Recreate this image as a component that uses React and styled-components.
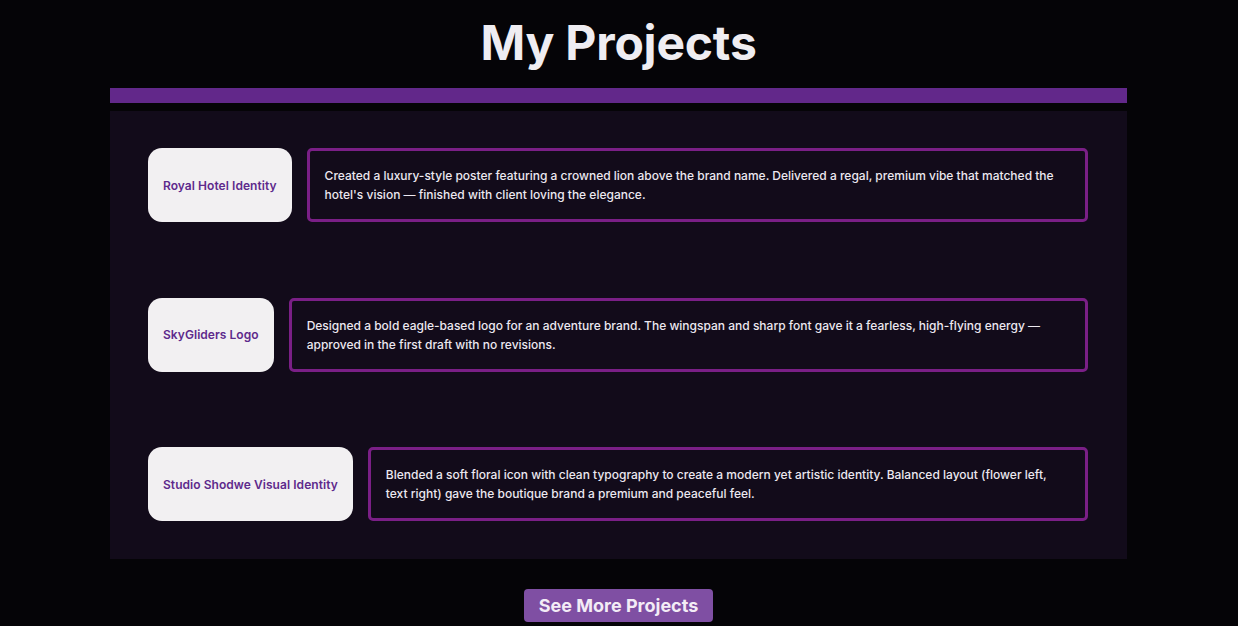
import React from "react";
import styled, { createGlobalStyle } from "styled-components";

const Global = createGlobalStyle`
  html, body { margin: 0; padding: 0; background: #050407; }
  body { font-family: Inter, "Noto Sans", sans-serif; -webkit-font-smoothing: antialiased; }
  * { box-sizing: border-box; }
`;

const Page = styled.main`
  display: flex;
  flex-direction: column;
  align-items: center;
  padding: 14px 111px 0 110px;
`;

const Title = styled.h1`
  margin: 0;
  font-size: 48px;
  line-height: 58px;
  font-weight: 700;
  color: #efedf2;
  letter-spacing: -0.2px;
`;

const Bar = styled.div`
  align-self: stretch;
  height: 15px;
  margin-top: 16px;
  background: #62288a;
`;

const Panel = styled.section`
  align-self: stretch;
  margin-top: 8px;
  background: #120b1a;
  padding: 37px 39px 38px 38px;
  display: flex;
  flex-direction: column;
  gap: 75.5px;
`;

const Row = styled.article`
  display: flex;
  align-items: stretch;
  gap: 15px;
`;

const Name = styled.div`
  flex: none;
  display: flex;
  align-items: center;
  padding: 0 15px;
  background: #f2f0f2;
  border-radius: 14px;
  color: #5e2a8c;
  font-size: 12px;
  font-weight: 600;
  letter-spacing: 0.05px;
  white-space: nowrap;
`;

const Desc = styled.p`
  flex: 1;
  margin: 0;
  border: 3px solid #7a1f86;
  border-radius: 5px;
  padding: 15px;
  color: #ece8f0;
  font-size: 12px;
  font-weight: 500;
  line-height: 19px;
`;

const Button = styled.button`
  margin-top: 30px;
  height: 33px;
  padding: 0 15px;
  border: none;
  border-radius: 4px;
  background: #7f4fa3;
  color: #f3ecf6;
  font-family: Inter, "Noto Sans", sans-serif;
  font-size: 18px;
  font-weight: 700;
  cursor: pointer;
`;

const projects = [
  {
    name: "Royal Hotel Identity",
    desc: "Created a luxury-style poster featuring a crowned lion above the brand name. Delivered a regal, premium vibe that matched the hotel's vision — finished with client loving the elegance.",
  },
  {
    name: "SkyGliders Logo",
    desc: "Designed a bold eagle-based logo for an adventure brand. The wingspan and sharp font gave it a fearless, high-flying energy — approved in the first draft with no revisions.",
  },
  {
    name: "Studio Shodwe Visual Identity",
    desc: "Blended a soft floral icon with clean typography to create a modern yet artistic identity. Balanced layout (flower left, text right) gave the boutique brand a premium and peaceful feel.",
  },
];

export default function App() {
  return (
    <>
      <Global />
      <Page>
        <Title>My Projects</Title>
        <Bar />
        <Panel>
          {projects.map((p) => (
            <Row key={p.name}>
              <Name>{p.name}</Name>
              <Desc>{p.desc}</Desc>
            </Row>
          ))}
        </Panel>
        <Button>See More Projects</Button>
      </Page>
    </>
  );
}
